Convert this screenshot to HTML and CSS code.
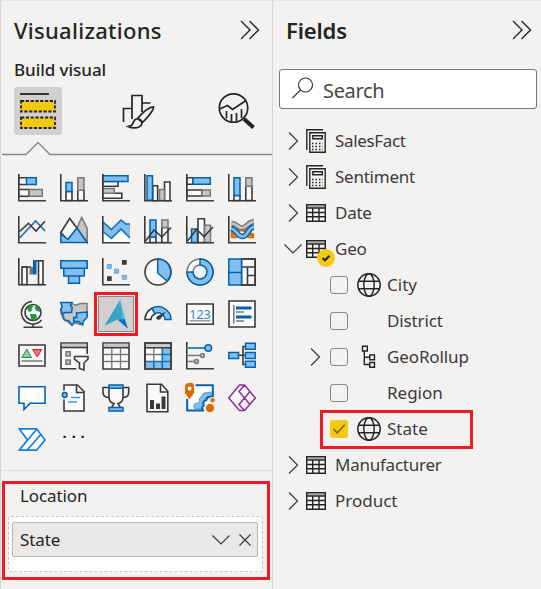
FILE: index.html
```html
<!DOCTYPE html>
<html lang="en">
<head>
<meta charset="utf-8">
<title>Visualizations and Fields</title>
<link rel="stylesheet" href="styles.css">
</head>
<body>
<svg class="defs" width="0" height="0">
  <symbol id="more" viewBox="0 0 20 20"><path class="thin" d="M1 1l9 9-9 9M9.500 1l9 9-9 9"/></symbol>
  <symbol id="right" viewBox="0 0 18 18"><path class="thin2" d="M5 .5l8.500 8.500L5 17.500"/></symbol>
  <symbol id="down" viewBox="0 0 18 18"><path class="thin2" d="M.5 4.500L9 13l8.500-8.500"/></symbol>
  <symbol id="table" viewBox="0 0 20 18"><path class="ink" d="M.7.8h18.600v16.400H.7zM.7 4h18.600M.7 8.500h18.600M.7 12.800h18.600M6.700 4v13M13 4v13" /><path class="ink" d="M1 2.600h18" opacity=".35"/></symbol>
  <symbol id="calc" viewBox="0 0 20 24"><path class="ink" d="M.8 21V.8H17M3.800 3.800h15.400v19.400H3.800zM6.800 6.700h9.500v3H6.800z"/><path class="dots" d="M6 14.500h11M6 17.500h11M6 20.500h11"/></symbol>
  <symbol id="world" viewBox="0 0 24 24"><path class="ink" d="M1.500 8.200h21M1.500 15.800h21"/><circle class="ink" cx="12" cy="12" r="11.200"/><ellipse class="ink" cx="12" cy="12" rx="5.200" ry="11.200"/></symbol>
  <symbol id="tree" viewBox="0 0 24 24"><path class="ink" d="M5.500 1.200h4.800V6H5.500zM12.800 10h4.700v4.700h-4.700zM12.800 17.500h4.700v4.700h-4.700zM7.300 6v13.500h5.500M7.300 12.300h5.500"/></symbol>
  <symbol id="axis" viewBox="0 0 28 28"><path class="d" d="M.8 0v26.800H28"/></symbol>
</svg>
<main class="app">
<section class="panel">
  <header class="head"><h1 class="title viz">Visualizations</h1><svg class="more"><use href="#more"/></svg></header>
  <h2 class="sub">Build visual</h2>
  <nav class="tabs">
    <button class="tab on" aria-label="Build"><svg width="48" height="48"><path d="M6 7h29" stroke="#252423" stroke-width="1.800"/><path d="M7 14h34v10.500H7zM7 30.500h34V41H7z" fill="#f2c811" stroke="#252423" stroke-width="1.800" stroke-dasharray="3.200 1.600"/></svg></button>
    <button class="tab" aria-label="Format"><svg width="48" height="48" class="tool"><path d="M13.500 35V21.500h8.500M22 32V8.500h10V25M32 16h8.500"/><path class="f" d="M27.500 31.500C33 25 38 20 43.500 19.800c.8 1.200-3 8-11 15.700zM18 39.500c4-1 4.500-1.500 5.500-4.500 1-3 4-4 6.500-2.500 3 2 2.500 6-1 7.500-3.500 1.500-8 .8-11-.5z"/></svg></button>
    <button class="tab last" aria-label="Analytics"><svg width="48" height="48" class="tool"><circle cx="20.500" cy="21" r="14.200"/><path d="M6.500 22l8-3.500 5 4L33 13.500M13.500 24v7.500M18.500 27v7.500M23.500 26v8M28.500 22v9"/><path d="M31 32l9.500 8.500" stroke-width="4"/></svg></button>
  </nav>
  <svg class="pointer" viewBox="0 0 271 15"><path d="M1 13.500h24L37 1.500l12 12h222"/></svg>
  <div class="gallery">
    <svg class="v"><use href="#axis"/><path class="w" d="M1 3.700h8v6.800H1zM1 15.500h10v6.800H1z"/><path class="b" d="M8.500 3.700h9.800v6.800H8.500z"/><path class="g" d="M11.300 15.500h13v6.800h-13z"/></svg>
    <svg class="v"><path class="w" d="M6 17.500h6v9H6zM17.800 16h6.200v10.500h-6.200z"/><path class="b" d="M6 8.500h6v9H6z"/><path class="g" d="M17.800 3.700H24v12.600h-6.200z"/><use href="#axis"/></svg>
    <svg class="v"><path class="w" d="M.8 7.500h15.200v4.800H.8zM.8 19.300h19v5H.8z"/><path class="g" d="M.8 14.500h11.500v4.800H.8z"/><path class="b" d="M.8 1.700h25.200v5.800H.8z"/><use href="#axis"/></svg>
    <svg class="v"><path class="w" d="M8.800 11.700h4.800v15H8.800zM20.500 8H26v18.700h-5.500z"/><path class="g" d="M15.500 15.500h5v11h-5z"/><path class="b" d="M3 1.700h5.500v24.500H3z"/><use href="#axis"/></svg>
    <svg class="v"><path class="w" d="M1 3.700h6v6.600H1zM1 16h15v6H1z"/><path class="b" d="M7 3.700h17.300v6.600H7z"/><path class="g" d="M16 16h8.300v6H16z"/><use href="#axis"/></svg>
    <svg class="v"><path class="w" d="M6 21.500h6v5H6zM17.800 12h6.200v14.500h-6.200z"/><path class="b" d="M6 3.700h6v17.800H6z"/><path class="g" d="M17.800 3.700H24v8.600h-6.200z"/><use href="#axis"/></svg>

    <svg class="v"><use href="#axis"/><path class="bl" d="M1.500 22L17.700 5l9.300 10"/><path class="d" d="M1.500 15.500l9-8.200L18 15l9-9.700"/></svg>
    <svg class="v"><path class="g" d="M17 12l4.700-10.500 5.500 11v14z"/><path class="w" d="M.8 16.500L9.700 2.500 17 12l-9 12z"/><path class="b" d="M.8 26.500V18L8 23.500 17 12l10 14.500z"/></svg>
    <svg class="v"><path fill="#fff" d="M1 15v12h26.500v-7z"/><path fill="#83beec" d="M1 6l8.500 7.500L19 4l5 4h4v14l-9-9-9.500 9.500L1 15.500z"/><path class="bl" d="M1 6l8.500 7.500L19 4l5 4h4M1 15.500l8.500 7L19 13l9 9"/><use href="#axis"/></svg>
    <svg class="v"><path class="w" d="M6 21h6v5.500H6zM17.800 11.500H24v15h-6.200z"/><path class="b" d="M6 4h6v17H6z"/><path class="g" d="M17.800 4H24v7.500h-6.200z"/><use href="#axis"/><path class="d" d="M1.500 25L10 14l8 7 9-9.500"/></svg>
    <svg class="v"><path class="b" d="M5.500 13h6v13.500h-6z"/><path class="w" d="M12 2.700h6.500v23.800H12z"/><path class="g" d="M18.600 9.200h5.900v17.300h-5.900z"/><use href="#axis"/><path class="d" d="M1.500 25l9-11.500 7.500 7 9-9.500"/></svg>
    <svg class="v" viewBox="0 0 28 28"><path d="M3.500 15h5v6.500h-5zM20 18h5.500v3.500H20z" fill="#ff9d43" stroke="#d66b00" stroke-width="1.300"/><path d="M3.500 18.500c5-1 5-5 10-5s7 5 12 6" fill="none" stroke="#d66b00" stroke-width="3.500"/><path d="M3.500 7.500c6 0 6 4.500 10.500 4.500S20 6 26 5.500" fill="none" stroke="#797775" stroke-width="5.500"/><path d="M3.500 7.500c6 0 6 4.500 10.500 4.500S20 6 26 5.500" fill="none" stroke="#c8c6c4" stroke-width="2.600"/><path d="M3 12.500c6 1 6 8 11.500 8S20 11.500 26 11" fill="none" stroke="#0063b1" stroke-width="5.500"/><path d="M3 12.500c6 1 6 8 11.500 8S20 11.500 26 11" fill="none" stroke="#83beec" stroke-width="2.700"/><use href="#axis"/></svg>

    <svg class="v"><path class="w" d="M4 9h5v17.500H4zM20.500 2.700H25v23.800h-4.500z"/><path class="d" d="M4 9h9M17 2.700h8"/><path d="M11.500 9H15v7.500h-3.500z" fill="#797775"/><path d="M15 2h3.500v14.500H15z" fill="#0063b1"/><use href="#axis"/></svg>
    <svg class="v"><path class="b" d="M.8 2.700h26.400v7.600H.8zM3.800 10.300h20.500V18H3.800zM8.500 18h11v7.200h-11z"/></svg>
    <svg class="v"><use href="#axis"/><path d="M20 2h4.700v4.700H20zM5 18.200h4.700v4.700H5z" fill="#3b3a39"/><path d="M5.300 6.500h4v4h-4zM12.500 11.200h4v4h-4zM20.300 17.300h4v4h-4z" fill="#83beec" stroke="#4c9bd3" stroke-width=".8"/></svg>
    <svg class="v"><circle class="w" cx="14" cy="14" r="13"/><path class="b" d="M13.700 1A13 13 0 0 1 23 23l-9.300-8z"/></svg>
    <svg class="v"><circle cx="14" cy="14" r="10" fill="none" stroke="#797775" stroke-width="7.600"/><circle cx="14" cy="14" r="10" fill="none" stroke="#fff" stroke-width="4.600"/><path class="b" d="M14 1a13 13 0 1 1-13 13h6a7 7 0 1 0 7-7z"/></svg>
    <svg class="v"><path class="w" d="M13.500 1h13.700v26H13.500zM13.500 9h13.700M19.500 9v18M19.500 17.500h7.700"/><path class="b" d="M.8 1h12.700v26H.8zM.8 14.500h12.700"/><path class="d" d="M13.500 1h13.700v26H13.500"/></svg>

    <svg class="v"><circle cx="15" cy="12.500" r="8" class="w"/><path fill="#23964b" d="M8.500 8l4-3 3 1-2 3 .5 2-3 1zM18 5l3 2 1.500 5-4-1-2-3zM12 14l6 0 1 3-3 4-3-2z"/><path class="d" d="M14 1.500A11.300 11.300 0 1 0 23.500 20M15 23.500V27M5.500 27.200h19"/></svg>
    <svg class="v"><path class="g" d="M11.500 3.500l4 1.700 5-1.700h6.500v10l-4 7-3 4-5-2-3 3-4-3.500L3.500 19 1 13V9z"/><path class="b" d="M.8 2.500H12l-1.500 3 1.700 2-.7 5H5L2.500 14 .8 10 2 7zM16.500 13l10.700-1V17l-4 4.500-.5 3.500-4-3.500h-5v-4h3z"/><path class="bl" d="M2.500 14l2 6 4.500 1 3 4 2.500-3.500"/></svg>
    <div class="selected"><svg class="v"><path fill="#36a1c9" d="M18.300-.5L2.500 25.800l13-6.200z"/><path fill="#5bb9dc" d="M18.300-.5l7.400 29-5.500-5z"/><path fill="#36a1c9" d="M18.300-.5l-2.800 20 4.500-.5z"/><path fill="#0072c9" d="M15.500 19.600l7-.5 3.500 9.700z"/></svg></div>
    <svg class="v"><path class="w" d="M1 19.500a13 13 0 0 1 7-11.300l3 5.500a7 7 0 0 0-4 5.800z"/><path class="b" d="M8 8.200a13 13 0 0 1 19 11.300h-6a7 7 0 0 0-10-6z"/><path fill="#3b3a39" d="M22 11.500l-5.500 7.300c-1.500 1.700-4.500 1-4.200-1 .1-1.200 1-1.500 2-2z"/></svg>
    <svg class="v"><path class="w" d="M.8 4h26.400v20.200H.8z"/><text x="14" y="18.500" class="num">123</text><path d="M3.500 20.800h21" stroke="#797775"/></svg>
    <svg class="v"><path class="w" d="M1 1h26v26H1z"/><path d="M5.800 5v18.500" stroke="#797775" stroke-width="1.500"/><path d="M8 8h15.500M8 17h15.500" stroke="#0063b1" stroke-width="3"/><path d="M8 12h8M8 21h8" stroke="#797775" stroke-width="1.600"/></svg>

    <svg class="v"><path class="w" d="M1 3h26v21H1z"/><path d="M4 15.500L8.700 7l4.800 8.500z" fill="#8fcb9d" stroke="#238b3e"/><path d="M14.700 7.500h9l-4.500 7.500z" fill="#f47373" stroke="#c5242c"/><path d="M3.500 19h21" stroke="#797775" stroke-width="1.500"/></svg>
    <svg class="v"><path class="w" d="M1 1h26.200v25.800H1z"/><path fill="#c8c6c4" d="M1.800 1.800h24.600v3H1.800z"/><path class="d" d="M1 5.500h26"/><path class="g" d="M6 9.800h4.300v4.300H6zM6 18h4.300v4.300H6z"/><path d="M12 12h18v17H17z" fill="#f3f2f1"/><path class="w" d="M14.500 14.500H28v2.500l-4 4V28l-4.500-1.500V21l-5-4z"/></svg>
    <svg class="v"><path class="w" d="M1 1h26v26H1z"/><path fill="#c8c6c4" d="M1.800 1.800h24.400v3H1.800z"/><path class="d" d="M1 5.700h26"/><path d="M1.800 12.500h24.400M1.800 19.500h24.400M9.800 6v20M18.500 6v20" stroke="#797775" stroke-width="1.300"/></svg>
    <svg class="v"><path class="w" d="M1 1h26v26H1z"/><path fill="#c8c6c4" d="M1.800 1.800h24.400v3H1.800z"/><path fill="#83beec" d="M18 6h8.500v20.500h-25V20H18z"/><path d="M1.800 12.500H18M9.800 6v14" stroke="#797775" stroke-width="1.300"/><path class="bl" d="M18.300 6v20.500M1.800 19.500h24.500M18.300 12.500h8.500M9.800 19.500v7"/><path class="d" d="M1 5.700h26M1 1h26v26H1z"/></svg>
    <svg class="v"><use href="#axis"/><path class="bl" d="M2 6h17"/><path d="M2 13.500h13M2 19.500h7" stroke="#797775" stroke-width="1.500"/><circle class="b" cx="22.300" cy="6" r="3.300"/><circle class="g" cx="16.500" cy="13.500" r="1.900"/><circle class="g" cx="10.500" cy="19.500" r="1.900"/></svg>
    <svg class="v"><path class="d" d="M10 13.300h8M18 4.500h-3V22.500h3"/><path class="b" d="M.8 10.500h9.700v6H.8zM17.500 1.300h9.700v6h-9.700zM17.500 10.500h9.700v6h-9.700zM17.500 19.300h9.700v6h-9.700z"/></svg>

    <svg class="v"><path fill="#fff" stroke="#0063b1" stroke-width="1.600" d="M1 2.800h26v16.400H12L6 25.500v-6.300H1z"/></svg>
    <svg class="v"><path class="w" d="M4 1h13.500L24 7.500V27H4z"/><path class="d" d="M16.500 1v7.500H24"/><circle cx="4.500" cy="11" r="4.500" fill="#f3f2f1"/><circle class="b" cx="4.700" cy="11" r="2.400"/><path d="M11 13.500h9M8 18h9" stroke="#4298db" stroke-width="1.700"/></svg>
    <svg class="v"><path class="d" d="M7 3.500H1v5c0 3 2 5 6.500 5M20.500 3.500h6.200v5c0 3-2 5-6.200 5"/><path class="w" d="M7 4h14v9c0 4-3 6-5 6.500L18.500 24h-9l2.500-4.500C9 19 7 17 7 13z"/><path class="b" d="M7 1h14v3.200H7zM7 23.500h14V27H7z"/></svg>
    <svg class="v"><path class="w" d="M3 .5h14.500l6.300 7V28H3z" transform="translate(0 -.3)"/><path class="d" d="M16.500 1v7h7"/><path d="M6 16h4v9H6zM12 19.500h4V25h-4zM17.500 12.500h4V25h-4z" fill="#3b3a39"/></svg>
    <svg class="v"><path fill="#fff" d="M2 2h25v10l-9 5-1 9H2z"/><path fill="#83beec" stroke="#4c9bd3" d="M9 25c-3-4 0-6 3-6 3-1 0-5 3-6 2-1 1-5 5-4l5-1v4c-3 1-6 1-6 4-3 2-4 5-2 9z"/><path d="M9.500 1.200h17.300V12c-4 1-6 1-6.500 4-4 1-3 4-2.500 5.500-1.800 1-2 3-1 5H1.200V15" fill="none" stroke="#0063b1" stroke-width="2"/><path fill="#dd6b00" stroke="#f3f2f1" d="M3.500-1.500h1C8-1.500 8.500 0 8.500 3v6L3.500 16-1.500 9V3c0-3 1.500-4.500 5-4.500z"/><circle cx="3.500" cy="4.500" r="2" fill="#fff"/><circle cx="24" cy="24" r="4.600" fill="#dd6b00" stroke="#f3f2f1"/><circle cx="26.500" cy="16.200" r="2.700" fill="#dd6b00" stroke="#f3f2f1"/></svg>
    <svg class="v"><path d="M11.500 1L.8 14l10.700 12.500h5L27.300 14 16.500 1zM16.500 1l-5.500 6.500 11 13M22 7.500L11 20.500l5.500 6" fill="#faf7fb" stroke="#8a2da5" stroke-width="1.500" stroke-linejoin="round"/></svg>

    <svg class="v"><path d="M1.200 2.800h17.300L27 14l-8.500 10.200H1.200L9.500 14zM1.200 2.800L9.500 14M1.200 24.200L18.500 3.500M9 24.200L22.800 8.500" fill="#fff" stroke="#1280dc" stroke-width="1.700" stroke-linejoin="round"/></svg>
    <svg class="v" viewBox="0 0 28 28"><path fill="#252423" d="M3.500 9.800h2.300v2.300H3.500zM12.700 9.800H15v2.300h-2.300zM21.500 9.800h2.300v2.300h-2.300z"/></svg>
  </div>
  <div class="location">
    <div class="loc-label">Location</div>
    <div class="drop"><div class="pill"><span class="pill-text">State</span><svg width="18" height="18"><use href="#down"/></svg><svg class="close" width="12" height="12"><path class="thin2" d="M.5.5l11 11M11.500.5l-11 11"/></svg></div></div>
  </div>
</section>
<section class="panel">
  <header class="head right"><h1 class="title fields">Fields</h1><svg class="more"><use href="#more"/></svg></header>
  <div class="search"><svg width="22" height="22"><circle cx="13.500" cy="8" r="7" class="thin2"/><path class="thin2" d="M8.500 13L.5 21"/></svg><span class="search-text">Search</span></div>
  <div class="list">
    <div class="row"><svg class="chev"><use href="#right"/></svg><svg class="ico calc"><use href="#calc"/></svg><span class="tighter">SalesFact</span></div>
    <div class="row"><svg class="chev"><use href="#right"/></svg><svg class="ico calc"><use href="#calc"/></svg><span class="tight">Sentiment</span></div>
    <div class="row"><svg class="chev"><use href="#right"/></svg><svg class="ico"><use href="#table"/></svg><span class="tight">Date</span></div>
    <div class="row"><svg class="chev"><use href="#down"/></svg><span class="badged"><svg class="ico"><use href="#table"/></svg><svg class="badge" viewBox="0 0 18 18"><circle cx="9" cy="9" r="9" fill="#f2c811"/><path d="M5.500 9l2.500 2.300 4.500-4.500" fill="none" stroke="#252423" stroke-width="2"/></svg></span><span class="tight">Geo</span></div>
    <div class="row child"><span></span><i class="box"></i><svg class="kind"><use href="#world"/></svg><span>City</span></div>
    <div class="row child"><span></span><i class="box"></i><span></span><span class="snug">District</span></div>
    <div class="row child"><svg class="chev"><use href="#right"/></svg><i class="box"></i><svg class="kind"><use href="#tree"/></svg><span class="snug">GeoRollup</span></div>
    <div class="row child"><span></span><i class="box"></i><span></span><span>Region</span></div>
    <div class="row child marked"><span></span><i class="box checked"><svg width="18" height="18"><path d="M3.500 9l3.700 3.800 7.500-8" fill="none" stroke="#5c4e08" stroke-width="1.200"/></svg></i><svg class="kind"><use href="#world"/></svg><span>State</span></div>
    <div class="row"><svg class="chev"><use href="#right"/></svg><svg class="ico"><use href="#table"/></svg><span class="tight">Manufacturer</span></div>
    <div class="row"><svg class="chev"><use href="#right"/></svg><svg class="ico"><use href="#table"/></svg><span>Product</span></div>
  </div>
</section>
</main>
</body>
</html>
```
FILE: styles.css
```css
*, *::after { box-sizing: border-box; }
body { margin: 0; width: 541px; height: 589px; overflow: hidden; background: #f3f2f1; color: #252423; font-family: "Noto Sans", "Open Sans", sans-serif; }
svg { display: block; flex: none; }
.defs { position: absolute; }
.app { display: grid; grid-template-columns: 272px 269px; height: 589px; border-top: 1px solid #e6e5e4; }
.panel { border-left: 1px solid #d8d7d6; min-width: 0; }
.head { display: flex; justify-content: space-between; align-items: center; height: 58px; padding: 0 12px 0 13px; }
.head.right { padding-right: 9px; }
.title { margin: 0; font-size: 22px; line-height: 30px; font-weight: 500; white-space: nowrap; }
.viz { letter-spacing: .28px; }
.fields { font-weight: 600; letter-spacing: -.15px; }
.more { width: 20px; height: 20px; }
.thin { fill: none; stroke: #252423; stroke-width: 1.400; }
.thin2 { fill: none; stroke: #3b3a39; stroke-width: 1.200; }
.ink { fill: none; stroke: #252423; stroke-width: 1.400; }
.dots { fill: none; stroke: #252423; stroke-width: 1.400; stroke-dasharray: 1.500 2; }
.sub { margin: 0 0 0 13px; height: 28px; line-height: 22px; font-size: 17px; font-weight: 500; letter-spacing: -.05px; }
.tabs { display: flex; gap: 48px; padding: 0 0 0 13px; }
.tab { width: 48px; height: 48px; padding: 0; border: 0; border-radius: 3px; background: none; }
.tab.last { margin-left: 7px; }
.tab.on { background: #d2d0ce; }
.tool { fill: none; stroke: #252423; stroke-width: 1.700; }
.tool .f { fill: #f3f2f1; }
.pointer { width: 271px; height: 15px; margin-top: 6px; fill: none; stroke: #8a8886; stroke-width: 1.300; }
.gallery { display: grid; grid-template-columns: repeat(6, 42px); grid-auto-rows: 42px; place-items: center; margin: 11px 0 0 10px; height: 303px; }
.v { width: 28px; height: 28px; overflow: visible; }
.d { fill: none; stroke: #3b3a39; stroke-width: 1.600; }
.w { fill: #fafafa; stroke: #3b3a39; stroke-width: 1.600; }
.b { fill: #83beec; stroke: #0063b1; stroke-width: 1.500; }
.g { fill: #c8c6c4; stroke: #797775; stroke-width: 1.500; }
.bl { fill: none; stroke: #1070b8; stroke-width: 1.600; }
.num { font-size: 12.500px; letter-spacing: 0; text-anchor: middle; fill: #2b88d8; }
.selected { display: grid; place-items: center; width: 44px; height: 44px; background: #d2d0ce; border: 3px solid #ed1c24; box-shadow: inset 0 0 0 1px #f3f2f1, inset 0 0 0 2px #8a8886; }
.location { position: relative; border-top: 1px solid #e1dfdd; padding: 14px 0 0 7px; }
.location::after { content: ""; position: absolute; left: 1px; top: 10px; width: 268px; height: 99px; border: 3px solid #ed1c24; }
.loc-label { height: 31px; padding-left: 12px; font-size: 17px; line-height: 22px; letter-spacing: -.1px; }
.drop { width: 255px; height: 56px; padding: 5px 4px 0 3px; background: #fff; border: 1px dashed #c8c6c4; border-radius: 3px; }
.pill { display: flex; align-items: center; height: 35px; padding: 0 6px 0 7px; background: #ebe9e8; border: 1px solid #b8b6b4; border-radius: 2px; font-size: 17px; letter-spacing: -.1px; }
.pill-text { flex: 1; }
.close { margin-left: 9px; }
.search { display: flex; align-items: center; width: 258px; height: 40px; margin: 10px 0 0 6px; padding-left: 12px; gap: 9px; background: #fff; border: 1px solid #797775; border-radius: 3px; color: #484644; font-size: 20px; letter-spacing: -.35px; }
.search svg { margin-top: -3px; }
.search-text { padding-top: 2px; }
.list { margin-top: 14px; font-size: 17px; color: #3b3a39; }
.row { display: grid; grid-template-columns: 18px 20px auto; column-gap: 4px; align-items: center; height: 36px; padding-left: 11px; line-height: 24px; white-space: nowrap; }
.row > span:last-child { padding-left: 5px; }
.tighter { letter-spacing: -.35px; }
.tight { letter-spacing: -.24px; }
.snug { letter-spacing: -.12px; }
.row.child { grid-template-columns: 18px 18px 24px auto; column-gap: 0; padding-left: 33px; }
.child .box { margin-left: 6px; }
.child .kind { margin-left: 15px; }
.row.child > span:last-child { padding-left: 21px; }
.chev { width: 18px; height: 18px; }
.ico { width: 20px; height: 18px; }
.calc { height: 24px; }
.kind { width: 24px; height: 24px; }
.box { display: block; width: 18px; height: 18px; border: 1px solid #8a8886; border-radius: 3px; }
.checked { background: #f2c811; border: 0; }
.badged { position: relative; }
.badge { position: absolute; left: 11px; top: 9px; width: 18px; height: 18px; }
.marked { position: relative; }
.marked::after { content: ""; position: absolute; left: 47px; top: -1px; width: 153px; height: 39px; border: 3px solid #ed1c24; }
```
